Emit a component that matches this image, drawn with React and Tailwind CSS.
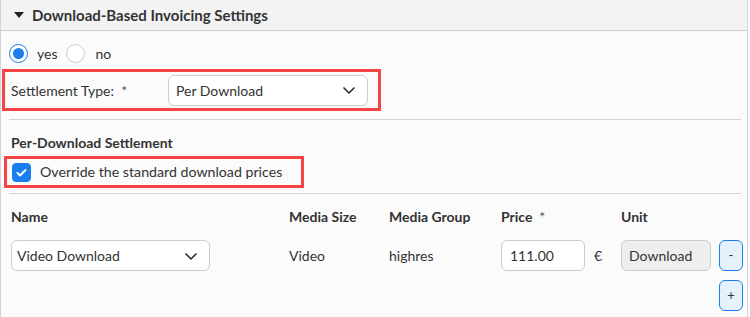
import React, { useState } from "react";

function Chevron() {
  return (
    <svg className="h-4 w-[18px] text-[#333]" viewBox="0 0 18 16" fill="none" stroke="currentColor" strokeWidth="1.7" strokeLinecap="round" strokeLinejoin="round">
      <path d="M4 6l5 5 5-5" />
    </svg>
  );
}

function FakeSelect({ value, className }) {
  return (
    <div className={"flex h-[31px] items-center justify-between rounded-md border border-[#ccc] bg-white pr-[9px] " + className}>
      <span>{value}</span>
      <Chevron />
    </div>
  );
}

export default function App() {
  const [yes, setYes] = useState(true);
  const [override, setOverride] = useState(true);

  return (
    <div className="h-[317px] w-[750px] overflow-hidden bg-white text-[14px] text-[#333]" style={{ fontFamily: "Lato, 'Noto Sans', sans-serif" }}>
      <div className="mr-[2px] h-full border-x border-[#d4d4d4] bg-[#fbfbfb]">
        {/* panel header */}
        <div className="flex h-[31px] items-center gap-[8px] border-b border-[#ccc] bg-[#f3f3f3] pl-[13px]">
          <svg className="h-[8px] w-[10px]" viewBox="0 0 10 8">
            <path d="M0 1h10L5 7z" fill="#222" />
          </svg>
          <span className="text-[15px] font-bold text-[#333]">Download-Based Invoicing Settings</span>
        </div>

        <div className="pr-[6px]">
          {/* yes / no */}
          <div className="flex h-[38px] items-center pl-[8px] pt-[7px]">
            <button onClick={() => setYes(true)} className="flex items-center gap-[9px]">
              <span className={"flex h-[19px] w-[19px] items-center justify-center rounded-full border bg-white " + (yes ? "border-[#1a7ef0]" : "border-[#ccc]")}>
                {yes && <span className="h-[11px] w-[11px] rounded-full bg-[#1a7ef0]" />}
              </span>
              <span>yes</span>
            </button>
            <button onClick={() => setYes(false)} className="ml-[9px] flex items-center gap-[10px]">
              <span className={"flex h-[19px] w-[19px] items-center justify-center rounded-full border bg-white " + (!yes ? "border-[#1a7ef0]" : "border-[#ccc]")}>
                {!yes && <span className="h-[11px] w-[11px] rounded-full bg-[#1a7ef0]" />}
              </span>
              <span>no</span>
            </button>
          </div>

          {/* settlement type */}
          <div className="ml-[1px] flex h-[42px] w-[379px] items-center border-[3px] border-[#f44545] pl-[6px]">
            <span className="w-[157px]">Settlement Type:&nbsp; <span className="text-[#555]">*</span></span>
            <FakeSelect value="Per Download" className="w-[200px] pl-[7px]" />
          </div>

          <div className="ml-[8px] mt-[8px] border-t border-[#d4d4d4]" />

          <div className="pl-[10px] pt-[12px] text-[14px] font-bold">Per-Download Settlement</div>

          {/* override checkbox */}
          <div className="ml-[3px] mt-[3px] flex h-[32px] w-[300px] items-center gap-[9px] border-[3px] border-[#f44545] pl-[5px]">
            <button
              onClick={() => setOverride(!override)}
              className={"flex h-[19px] w-[19px] items-center justify-center rounded-[4px] border " + (override ? "border-[#1a7ef0] bg-[#1a7ef0]" : "border-[#ccc] bg-white")}
            >
              {override && (
                <svg className="h-[13px] w-[13px]" viewBox="0 0 16 16" fill="none" stroke="white" strokeWidth="2.4" strokeLinecap="round" strokeLinejoin="round">
                  <path d="M3 8.5l3.2 3.2L13 5" />
                </svg>
              )}
            </button>
            <span className="text-[14.2px]">Override the standard download prices</span>
          </div>

          <div className="ml-[8px] mt-[5px] border-t border-[#d4d4d4]" />

          {/* table */}
          <div className="grid grid-cols-[278px_100px_112px_120px_98px_auto] pl-[10px]">
            <div className="pt-[12px] pb-[13px] font-bold">Name</div>
            <div className="pt-[12px] font-bold">Media Size</div>
            <div className="pt-[12px] font-bold">Media Group</div>
            <div className="pt-[12px] font-bold">Price&nbsp; <span className="font-normal text-[#555]">*</span></div>
            <div className="pt-[12px] font-bold">Unit</div>
            <div />

            <div className="flex items-start">
              <FakeSelect value="Video Download" className="w-[199px] pl-[5px]" />
            </div>
            <div className="flex h-[31px] items-center">Video</div>
            <div className="flex h-[31px] items-center">highres</div>
            <div className="flex h-[31px] items-center gap-[9px]">
              <div className="flex h-[31px] w-[84px] items-center rounded-md border border-[#ccc] bg-white pl-[8px]">111.00</div>
              <span>€</span>
            </div>
            <div className="flex h-[31px] w-[90px] items-center rounded-md border border-[#ccc] bg-[#eee] pl-[7px]">Download</div>
            <div className="flex flex-col gap-[9px]">
              <button className="flex h-[31px] w-[24px] items-center justify-center rounded-md border border-[#1a7ef0] bg-[#e6f1fe] text-[13px] leading-none">-</button>
              <button className="flex h-[31px] w-[24px] items-center justify-center rounded-md border border-[#1a7ef0] bg-[#e6f1fe] text-[13px] leading-none">+</button>
            </div>
          </div>
        </div>
      </div>
    </div>
  );
}
